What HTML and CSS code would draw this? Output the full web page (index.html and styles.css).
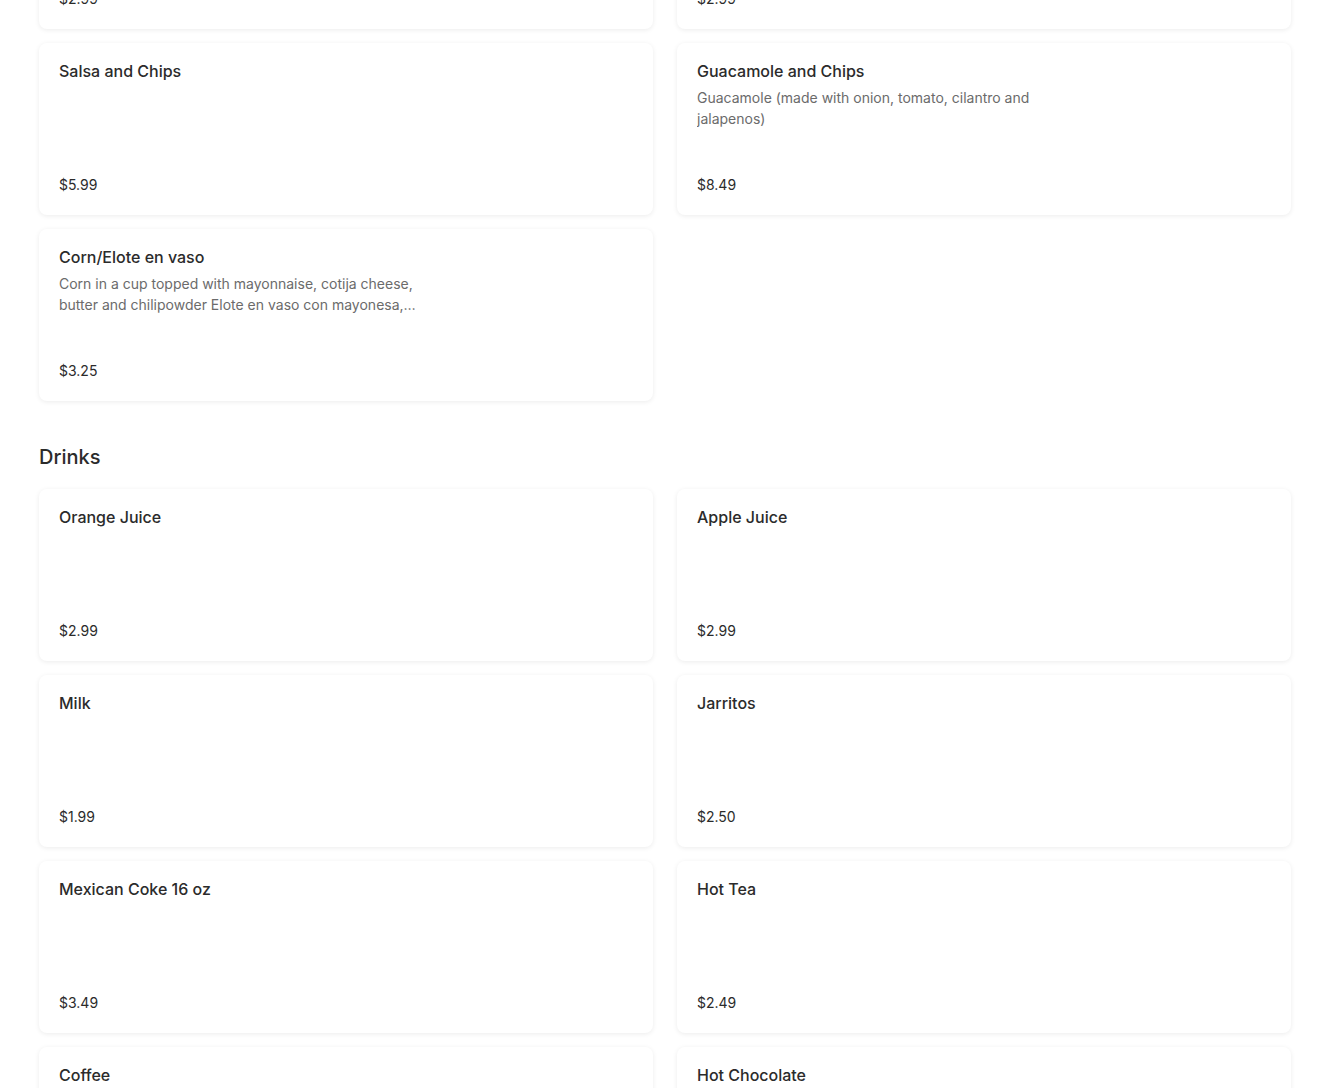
FILE: index.html
```html
<!DOCTYPE html>
<html lang="en">
<head>
  <meta charset="UTF-8" />
  <meta name="viewport" content="width=device-width, initial-scale=1.0"/>
  <title>Menu</title>
  <link rel="stylesheet" href="styles.css">
</head>
<body>

  <main class="menu">

    <!-- Sides (scrolled past the top) -->
    <section class="menu-section scrolled">
      <div class="item-grid">
        <div class="item-card">
          <h3 class="item-name">Rice</h3>
          <p class="item-desc"></p>
          <span class="item-price">$2.99</span>
        </div>
        <div class="item-card">
          <h3 class="item-name">Beans</h3>
          <p class="item-desc"></p>
          <span class="item-price">$2.99</span>
        </div>
        <div class="item-card">
          <h3 class="item-name">Salsa and Chips</h3>
          <p class="item-desc"></p>
          <span class="item-price">$5.99</span>
        </div>
        <div class="item-card">
          <h3 class="item-name">Guacamole and Chips</h3>
          <p class="item-desc">Guacamole (made with onion, tomato, cilantro and jalapenos)</p>
          <span class="item-price">$8.49</span>
        </div>
        <div class="item-card">
          <h3 class="item-name">Corn/Elote en vaso</h3>
          <p class="item-desc">Corn in a cup topped with mayonnaise, cotija cheese, butter and chilipowder Elote en vaso con mayonesa, queso cotija, mantequilla y chile en polvo</p>
          <span class="item-price">$3.25</span>
        </div>
      </div>
    </section>

    <!-- Drinks -->
    <section class="menu-section">
      <h2 class="section-title">Drinks</h2>
      <div class="item-grid">
        <div class="item-card">
          <h3 class="item-name">Orange Juice</h3>
          <p class="item-desc"></p>
          <span class="item-price">$2.99</span>
        </div>
        <div class="item-card">
          <h3 class="item-name">Apple Juice</h3>
          <p class="item-desc"></p>
          <span class="item-price">$2.99</span>
        </div>
        <div class="item-card">
          <h3 class="item-name">Milk</h3>
          <p class="item-desc"></p>
          <span class="item-price">$1.99</span>
        </div>
        <div class="item-card">
          <h3 class="item-name">Jarritos</h3>
          <p class="item-desc"></p>
          <span class="item-price">$2.50</span>
        </div>
        <div class="item-card">
          <h3 class="item-name">Mexican Coke 16 oz</h3>
          <p class="item-desc"></p>
          <span class="item-price">$3.49</span>
        </div>
        <div class="item-card">
          <h3 class="item-name">Hot Tea</h3>
          <p class="item-desc"></p>
          <span class="item-price">$2.49</span>
        </div>
        <div class="item-card">
          <h3 class="item-name">Coffee</h3>
          <p class="item-desc"></p>
          <span class="item-price">$2.49</span>
        </div>
        <div class="item-card">
          <h3 class="item-name">Hot Chocolate</h3>
          <p class="item-desc"></p>
          <span class="item-price">$2.99</span>
        </div>
      </div>
    </section>

  </main>

</body>
</html>
```

FILE: styles.css
```css
* {
  box-sizing: border-box;
  margin: 0;
  padding: 0;
}

body {
  font-family: 'Inter', 'Noto Sans', sans-serif;
  background: #fff;
  color: #2b2b2b;
  overflow: hidden;
}

.menu {
  padding: 0 39px;
}

/* page is scrolled, previous cards are cut at the top */
.scrolled {
  margin-top: -143px;
}

.menu-section {
  margin-bottom: 44px;
}

.section-title {
  font-size: 20px;
  font-weight: 500;
  line-height: 24px;
  color: #2b2b2b;
  margin-bottom: 20px;
}

.item-grid {
  display: grid;
  grid-template-columns: 1fr 1fr;
  column-gap: 24px;
  row-gap: 14px;
}

.item-card {
  height: 172px;
  padding: 20px;
  background: #fff;
  border-radius: 8px;
  box-shadow: 0 1px 5px rgba(0, 0, 0, 0.08);
  display: flex;
  flex-direction: column;
}

.item-name {
  font-size: 16px;
  font-weight: 500;
  line-height: 16px;
  color: #2b2b2b;
}

.item-desc {
  max-width: 372px;
  margin-top: 8px;
  font-size: 14px;
  line-height: 21px;
  color: #6b6b6b;
  display: -webkit-box;
  -webkit-line-clamp: 2;
  -webkit-box-orient: vertical;
  overflow: hidden;
}

.item-price {
  margin-top: auto;
  font-size: 14px;
  line-height: 18px;
  margin-bottom: 1px;
  color: #2b2b2b;
}
```
